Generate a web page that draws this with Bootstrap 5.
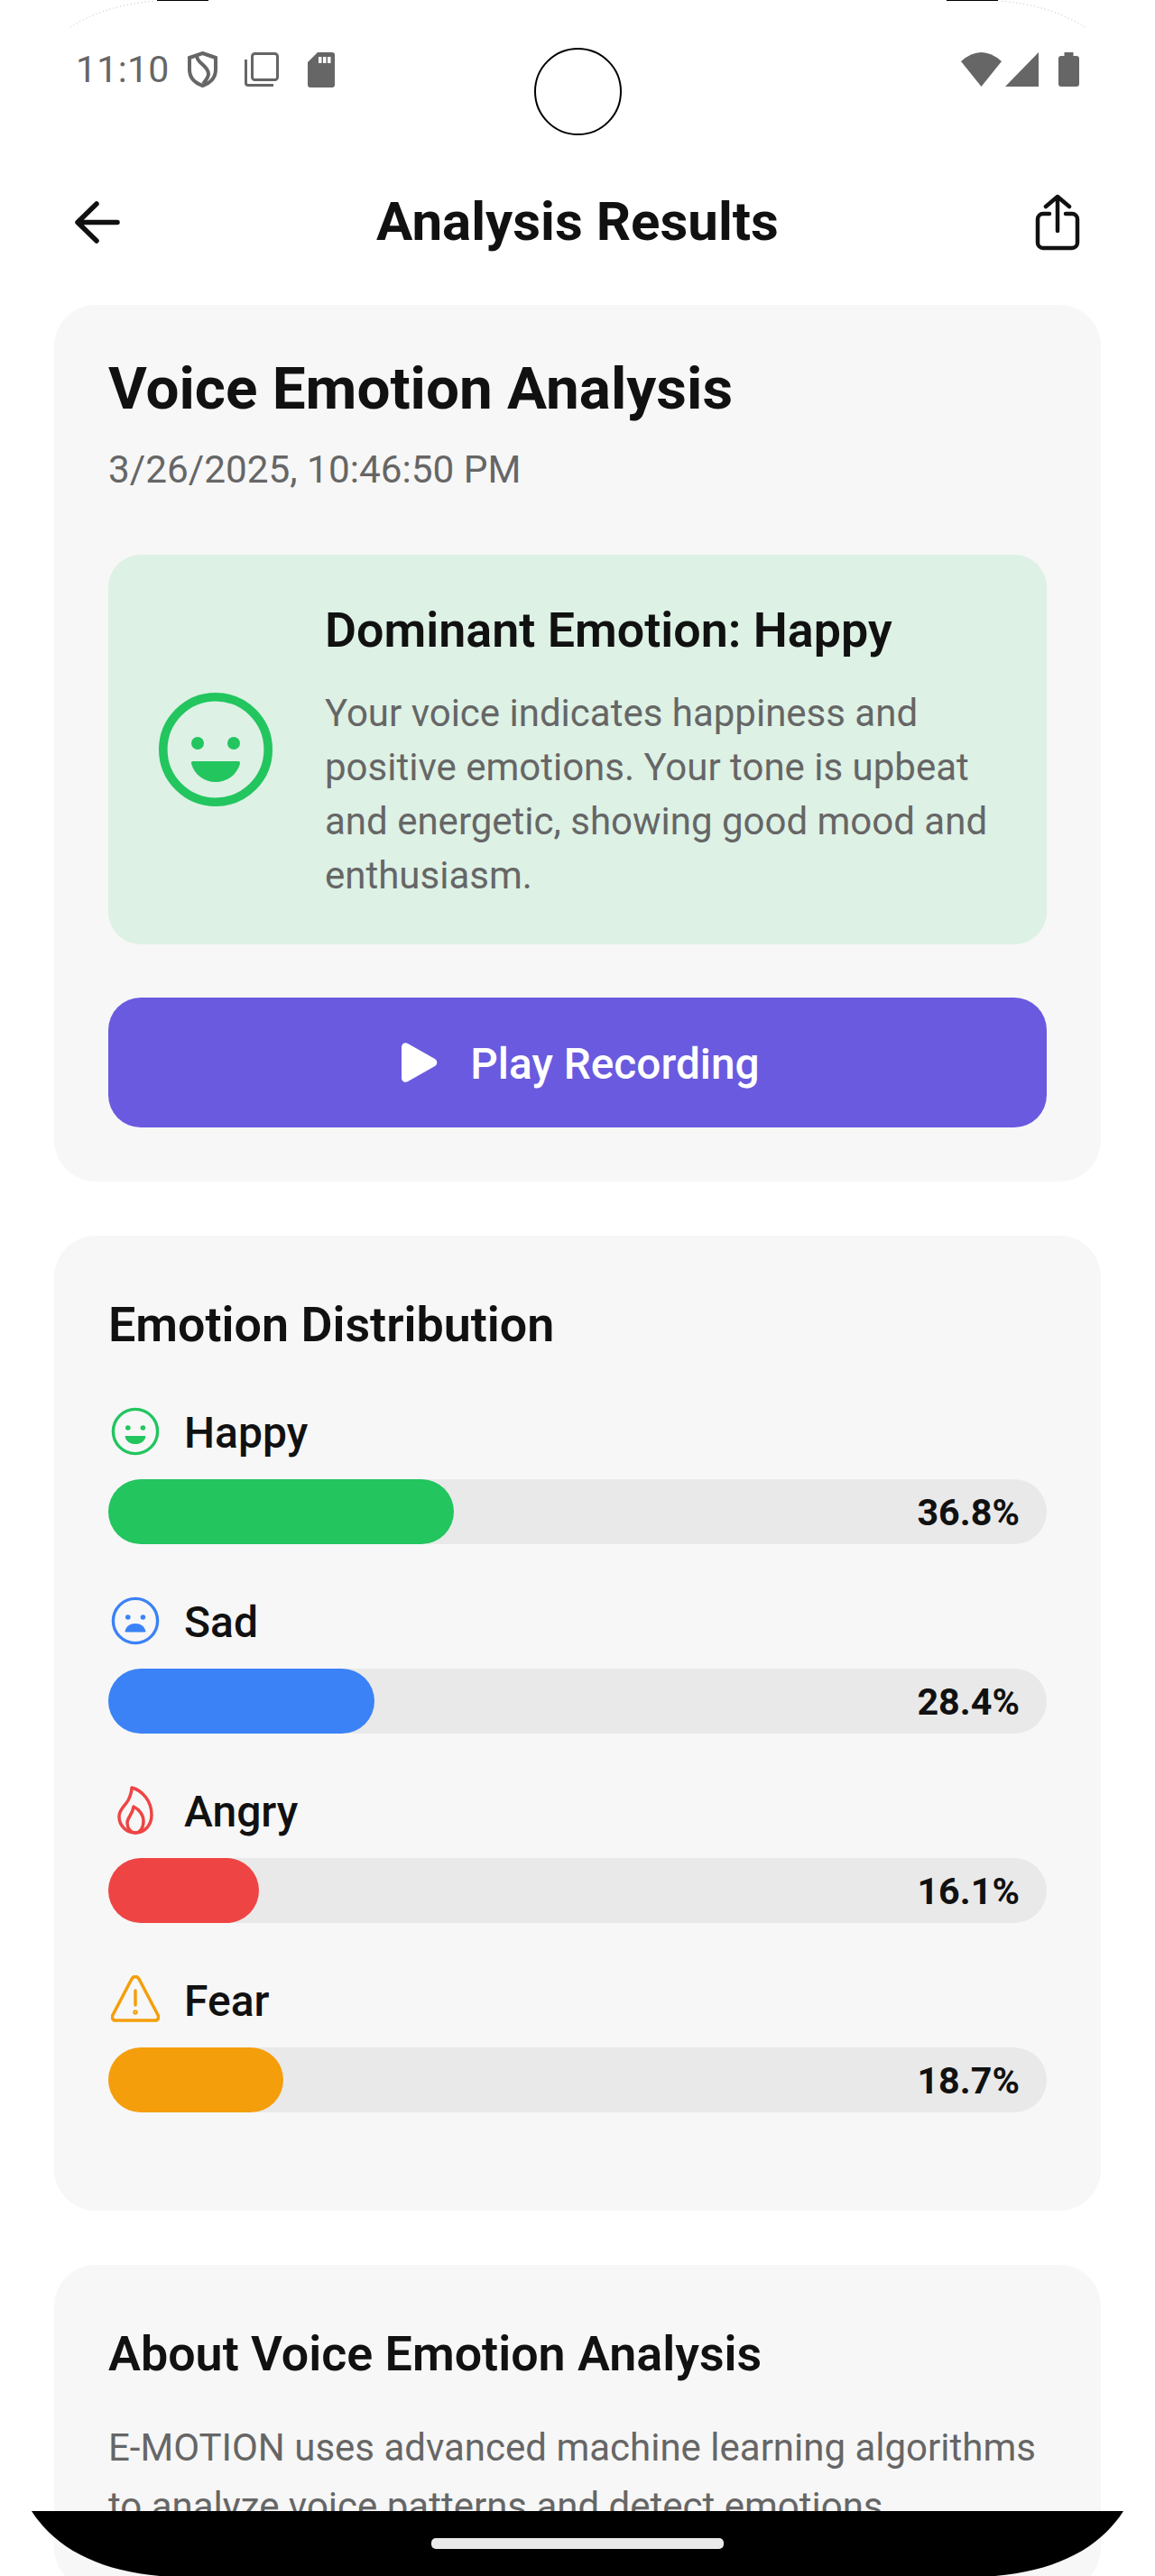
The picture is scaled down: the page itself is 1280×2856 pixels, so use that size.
<!DOCTYPE html>
<html lang="en">
  <head>
    <meta charset="UTF-8" />
    <meta name="viewport" content="width=device-width, initial-scale=1.0" />
    <title>Analysis Results</title>
    <link href="https://cdn.jsdelivr.net/npm/bootstrap@5.3.0/dist/css/bootstrap.min.css" rel="stylesheet" />
    <style>
      html, body { margin: 0; background: #fff; }
      body { font-family: Roboto, "Liberation Sans", sans-serif; color: #111; }
      .screen { position: relative; width: 1280px; height: 2856px; overflow: hidden; background: #fff; }
      .status-row { height: 184px; padding: 53px 84px 0 84px; color: #666; }
      .status-group { height: 48px; }
      .status-time { font-size: 41px; line-height: 48px; letter-spacing: .3px; }
      .st-shield { margin-left: 20px; }
      .st-copy { margin-left: 30px; }
      .st-sd { margin-left: 32px; }
      .st-signal { margin-left: 4px; }
      .st-batt { margin-left: 22px; }
      .cam-hole { position: absolute; left: 592px; top: 53px; width: 97px; height: 97px; border: 2px solid #000; border-radius: 50%; }
      .top-row { height: 124px; padding: 0 83px 0 83px; margin-bottom: 30px; }
      .top-title { font-size: 60px; font-weight: 700; line-height: 1; }
      .page-body { padding: 0 60px; }
      .panel { background: #f7f7f7; border-radius: 46px; padding: 60px; margin-bottom: 60px; }
      .panel-dist { padding-bottom: 57px; }
      .result-title { font-size: 65.6px; font-weight: 700; line-height: 74px; margin: -4.500px 0 0; }
      .result-date { font-size: 42.3px; line-height: 60px; color: #666; margin: 23px 0 64px; }
      .dom-box { background: #ddf1e5; border-radius: 36px; padding: 30px 56px; height: 432px; }
      .dom-face { width: 126px; height: 126px; flex: none; margin-right: 58px; }
      .dom-body { padding-top: 6px; }
      .dom-title { font-size: 53.8px; font-weight: 600; line-height: 64px; margin: 0 0 30px; }
      .dom-text { font-size: 42px; line-height: 60px; color: #666; margin: 0; }
      .play-btn { height: 144px; margin-top: 59px; padding-left: 19px; border-radius: 36px; background: #6a5adf; color: #fff; font-size: 47.8px; font-weight: 500; width: 100%; border: 0; }
      .play-icon { margin-right: 36px; }
      .play-label { padding-top: 6px; }
      .sec-title { font-size: 53.8px; font-weight: 600; line-height: 64px; margin: 7px 0 39px; }
      .emo-list { padding-top: 14px; }
      .emo-row { height: 210px; }
      .emo-label { height: 70px; margin-bottom: 16px; font-size: 48px; font-weight: 500; }
      .emo-label svg { width: 54px; height: 54px; margin: -4px 27px 0 3px; flex: none; }
      .bar-track { position: relative; height: 72px; border-radius: 36px; background: #e9e9e9; }
      .bar-fill { height: 72px; border-radius: 36px; }
      .bar-pct { position: absolute; right: 30px; top: 1px; line-height: 72px; font-size: 41.3px; font-weight: 700; }
      .about-text { font-size: 42px; line-height: 65px; color: #666; margin: 0; }
      .frame-top, .frame-bottom { position: absolute; left: 0; width: 1280px; }
      .frame-top { top: 0; height: 40px; }
      .frame-bottom { top: 2784px; height: 72px; }
    </style>
  </head>
  <body>
    <div class="screen">
      <div class="status-row d-flex justify-content-between align-items-start">
        <div class="status-group d-flex align-items-center">
          <span class="status-time">11:10</span>
          <svg class="st-shield" width="33" height="40" viewBox="0 0 33 40" fill="none" stroke="#666" stroke-width="4"><path d="M16.500 2 31 7v13c0 9-6 15-14.500 18C8 35 2 29 2 20V7z"/><path d="M10 5c0 8 13 11 13 20 0 4-3 7-6 11"/></svg>
          <svg class="st-copy" width="38" height="38" viewBox="0 0 38 38" fill="none" stroke="#666" stroke-width="3"><rect x="8.500" y="1.500" width="28" height="29" rx="3"/><path d="M1.500 8v26a2.500 2.500 0 0 0 2.500 2.500h28"/></svg>
          <svg class="st-sd" width="30" height="39" viewBox="0 0 30 39" fill="#666"><path d="M11 0h16a3 3 0 0 1 3 3v33a3 3 0 0 1-3 3H3a3 3 0 0 1-3-3V11z"/><path fill="#fff" d="M12 5h3.500v7H12zM17 5h3.500v7H17zM22 5h3.500v7H22z"/></svg>
        </div>
        <div class="status-group d-flex align-items-center">
          <svg width="45" height="38" viewBox="0 0 45 38" fill="#666"><path d="M0 10Q22.500-10 45 10L22.500 38z"/></svg>
          <svg class="st-signal" width="37" height="38" viewBox="0 0 37 38" fill="#666"><path d="M37 0v38H0z"/></svg>
          <svg class="st-batt" width="23" height="38" viewBox="0 0 23 38" fill="#666"><path d="M6.500 0h10v4h3.500a3 3 0 0 1 3 3v28a3 3 0 0 1-3 3H3a3 3 0 0 1-3-3V7a3 3 0 0 1 3-3h3.500z"/></svg>
        </div>
      </div>
      <div class="cam-hole"></div>

      <div class="top-row d-flex justify-content-between align-items-center">
        <svg width="50" height="47" viewBox="0 0 50 47" fill="none" stroke="#111" stroke-width="5.500" stroke-linecap="round" stroke-linejoin="round"><path d="M24 3 3 23.500 24 44M4 23.500h43"/></svg>
        <span class="top-title">Analysis Results</span>
        <svg width="50" height="63" viewBox="0 0 50 63" fill="none" stroke="#111" stroke-width="4.500" stroke-linecap="round" stroke-linejoin="round"><path d="M25 41V3M12 14 25 3l13 11M16 22H9a6 6 0 0 0-6 6v26a6 6 0 0 0 6 6h32a6 6 0 0 0 6-6V28a6 6 0 0 0-6-6h-7"/></svg>
      </div>

      <div class="page-body">
        <div class="panel">
          <h1 class="result-title">Voice Emotion Analysis</h1>
          <p class="result-date">3/26/2025, 10:46:50 PM</p>
          <div class="dom-box d-flex align-items-center">
            <svg class="dom-face" viewBox="0 0 126 126"><circle cx="63" cy="63" r="58.200" fill="none" stroke="#22c55e" stroke-width="9.600"/><circle cx="43" cy="56" r="7" fill="#22c55e"/><circle cx="83" cy="56" r="7" fill="#22c55e"/><path d="M38 76h50c2 0 2.400 1.500 1.700 3.500C86 91 76 99 63 99s-23-8-26.700-19.500c-.7-2 -.3-3.500 1.700-3.500z" fill="#22c55e"/></svg>
            <div class="dom-body">
              <h2 class="dom-title">Dominant Emotion: Happy</h2>
              <p class="dom-text">Your voice indicates happiness and positive emotions. Your tone is upbeat and energetic, showing good mood and enthusiasm.</p>
            </div>
          </div>
          <button type="button" class="play-btn btn d-flex align-items-center justify-content-center">
            <svg class="play-icon" width="40" height="44" viewBox="0 0 40 44" fill="#fff"><path d="M0 5c0-4 4-6 7-4l30 17c3 2 3 6 0 8L7 43c-3 2-7 0-7-4z"/></svg>
            <span class="play-label">Play Recording</span>
          </button>
        </div>

        <div class="panel panel-dist">
          <h2 class="sec-title">Emotion Distribution</h2>

          <div class="emo-list">
            <div class="emo-row">
              <div class="emo-label d-flex align-items-center">
                <svg viewBox="0 0 54 54"><circle cx="27" cy="27" r="24.600" fill="none" stroke="#22c55e" stroke-width="3.400"/><circle cx="18.800" cy="23" r="2.800" fill="#22c55e"/><circle cx="35.400" cy="23" r="2.800" fill="#22c55e"/><path d="M16.500 32h21c.8 0 1 .5.8 1.200C37 38 33 41 27 41s-10-3-11.300-7.800c-.2-.7 0-1.200.8-1.200z" fill="#22c55e"/></svg>
                Happy
              </div>
              <div class="bar-track">
                <div class="bar-fill" style="width:36.8%;background:#22c55e"></div>
                <span class="bar-pct">36.8%</span>
              </div>
            </div>

            <div class="emo-row">
              <div class="emo-label d-flex align-items-center">
                <svg viewBox="0 0 54 54"><circle cx="27" cy="27" r="24.600" fill="none" stroke="#3b82f6" stroke-width="3.400"/><circle cx="18.800" cy="23" r="2.800" fill="#3b82f6"/><circle cx="35.400" cy="23" r="2.800" fill="#3b82f6"/><path d="M16.500 39.500h21c.8 0 1.200-.5.900-1.200C37 33 33 30 27 30s-10 3-11.400 8.300c-.3.700.1 1.200.9 1.200z" fill="#3b82f6"/></svg>
                Sad
              </div>
              <div class="bar-track">
                <div class="bar-fill" style="width:28.4%;background:#3b82f6"></div>
                <span class="bar-pct">28.4%</span>
              </div>
            </div>

            <div class="emo-row">
              <div class="emo-label d-flex align-items-center">
                <svg viewBox="0 0 54 54" fill="none" stroke="#ef4444" stroke-width="3.500" stroke-linejoin="round"><path d="M23 2c12 3 22 15 22 30 0 12-8 20-18 20S9 44 9 34c0-8 6-11 10-18 2-4 4-8 4-14z"/><path d="M25 23c6 3 11 9 11 16 0 8-4 13-9 13s-9-5-9-11c0-6 6-9 7-18z"/></svg>
                Angry
              </div>
              <div class="bar-track">
                <div class="bar-fill" style="width:16.1%;background:#ef4444"></div>
                <span class="bar-pct">16.1%</span>
              </div>
            </div>

            <div class="emo-row">
              <div class="emo-label d-flex align-items-center">
                <svg viewBox="0 0 54 54" fill="none" stroke="#f59e0b" stroke-width="3.500" stroke-linecap="round" stroke-linejoin="round"><path d="M23 4c2-3.500 6-3.500 8 0l21 40c1.500 3 0 6-3 6H5c-3 0-4.500-3-3-6z"/><path d="M27 17v16"/><circle cx="27" cy="41" r="1"/></svg>
                Fear
              </div>
              <div class="bar-track">
                <div class="bar-fill" style="width:18.7%;background:#f59e0b"></div>
                <span class="bar-pct">18.7%</span>
              </div>
            </div>
          </div>
        </div>

        <div class="panel">
          <h2 class="sec-title">About Voice Emotion Analysis</h2>
          <p class="about-text">E-MOTION uses advanced machine learning algorithms to analyze voice patterns and detect emotions.</p>
        </div>
      </div>

      <svg class="frame-top" viewBox="0 0 1280 40" fill="none">
        <path d="M78 30Q115 6 172 1" stroke="#bbb" stroke-width="1" stroke-dasharray="1 3"/>
        <path d="M1202 30Q1165 6 1108 1" stroke="#bbb" stroke-width="1" stroke-dasharray="1 3"/>
        <path d="M174 0h57M1049 0h57" stroke="#000" stroke-width="2"/>
      </svg>
      <svg class="frame-bottom" viewBox="0 0 1280 72">
        <path d="M35 0H1245C1218 42 1170 66 1103 72H177C110 66 62 42 35 0z" fill="#000"/>
        <rect x="478" y="30" width="324" height="12" rx="5" fill="#eaeaea"/>
      </svg>
    </div>
    <script src="https://cdn.jsdelivr.net/npm/bootstrap@5.3.0/dist/js/bootstrap.bundle.min.js"></script>
  </body>
</html>
